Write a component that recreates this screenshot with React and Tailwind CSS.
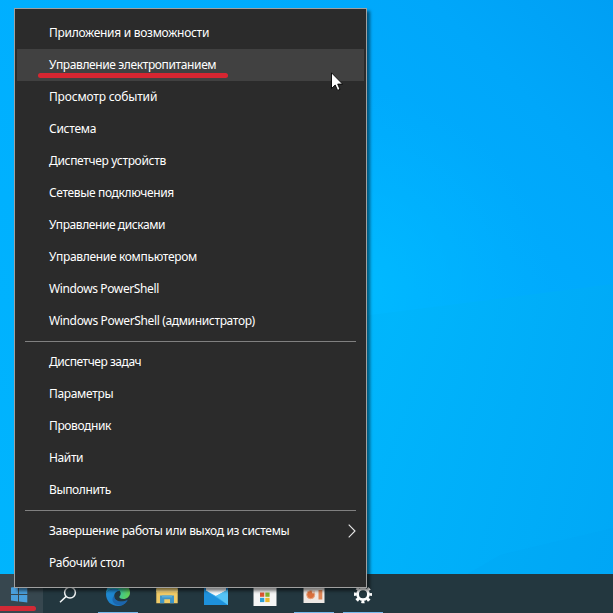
import React from "react";

const menuGroups = [
  [
    { label: "Приложения и возможности", tracking: "tracking-[-0.28px]" },
    { label: "Управление электропитанием", tracking: "tracking-[-0.38px]", active: true },
    { label: "Просмотр событий", tracking: "tracking-[-0.18px]" },
    { label: "Система", tracking: "tracking-[-0.28px]" },
    { label: "Диспетчер устройств", tracking: "tracking-[-0.32px]" },
    { label: "Сетевые подключения", tracking: "tracking-[-0.36px]" },
    { label: "Управление дисками", tracking: "tracking-[-0.42px]" },
    { label: "Управление компьютером", tracking: "tracking-[-0.32px]" },
    { label: "Windows PowerShell", tracking: "tracking-[-0.38px]" },
    { label: "Windows PowerShell (администратор)", tracking: "tracking-[-0.35px]" },
  ],
  [
    { label: "Диспетчер задач", tracking: "tracking-[-0.46px]" },
    { label: "Параметры", tracking: "tracking-[-0.33px]" },
    { label: "Проводник", tracking: "tracking-[-0.38px]" },
    { label: "Найти", tracking: "tracking-[-0.38px]" },
    { label: "Выполнить", tracking: "tracking-[-0.38px]" },
  ],
  [
    { label: "Завершение работы или выход из системы", tracking: "tracking-[-0.32px]", submenu: true },
    { label: "Рабочий стол", tracking: "tracking-[-0.24px]" },
  ],
];

const Wallpaper = () => (
  <svg className="absolute inset-0 h-full w-full" viewBox="0 0 613 613">
    <defs>
      <linearGradient id="sky" x1="0" y1="613" x2="613" y2="0" gradientUnits="userSpaceOnUse">
        <stop offset="0" stopColor="#00b5fd" />
        <stop offset="0.6" stopColor="#00aeff" />
        <stop offset="0.85" stopColor="#00a7fa" />
        <stop offset="1" stopColor="#009ff4" />
      </linearGradient>
      <radialGradient id="glow" cx="350" cy="290" r="200" gradientUnits="userSpaceOnUse">
        <stop offset="0" stopColor="#00bbff" />
        <stop offset="1" stopColor="#00b4ff" stopOpacity="0" />
      </radialGradient>
      <linearGradient id="beam" x1="370" y1="400" x2="640" y2="480" gradientUnits="userSpaceOnUse">
        <stop offset="0" stopColor="#00b5fb" />
        <stop offset="1" stopColor="#00a7f5" />
      </linearGradient>
    </defs>
    <rect width="613" height="613" fill="url(#sky)" />
    <rect width="613" height="613" fill="url(#glow)" />
    <path d="M200 337 L370 315 L613 284 V613 H200Z" fill="url(#beam)" opacity="0.85" />
    <path d="M500 555 L613 528 V613 H400Z" fill="#009ff0" opacity="0.12" />
  </svg>
);

const StartIcon = () => (
  <svg className="h-6 w-6" viewBox="0 0 24 24" fill="#4a9fdc">
    <path d="M4 5.600 11 4.600V12H4zM12 4.400 20.300 3.200V12H12zM4 13H11V19.400L4 18.500zM12 13H20.300V20.600L12 19.500z" />
  </svg>
);

const SearchIcon = () => (
  <svg className="h-6 w-6" viewBox="0 0 24 24" fill="none" stroke="#f2f5f6" strokeWidth="1.5">
    <circle cx="13" cy="10.600" r="5.400" />
    <path d="M9.200 14.400 3 20.200" />
  </svg>
);

const EdgeIcon = () => (
  <svg className="h-6 w-6" viewBox="0 0 24 24">
    <defs>
      <linearGradient id="edgeTop" x1="0" y1="0.3" x2="1" y2="0.5">
        <stop offset="0" stopColor="#2aa7e4" />
        <stop offset="0.5" stopColor="#31c3ac" />
        <stop offset="1" stopColor="#62cf56" />
      </linearGradient>
      <linearGradient id="edgeBody" x1="0" y1="0" x2="0.7" y2="1">
        <stop offset="0" stopColor="#1f8fd6" />
        <stop offset="1" stopColor="#1c78c4" />
      </linearGradient>
    </defs>
    <path d="M0 12C0 4 6 0 12 0c7 0 12 5 12 10.500 0 4-3 6.500-6.600 6.500-3 0-4-1-4-1.900 0-.9 1.300-1.400 1.300-3.500C14.700 8.800 12 7 8.500 7 4 7 .5 9 0 12z" fill="url(#edgeTop)" />
    <path d="M0 12C.4 9 4 6.800 8.500 6.800c2.500 0 4.500.9 5.500 2.200-2.500-.5-5.400 1-5.800 4.500-.5 5 5.500 7.500 11.500 5.200l1.600-.5C19.500 21.800 16 24 12 24 5 24 0 19 0 12z" fill="url(#edgeBody)" />
    <path d="M8.200 13.500c-.2 5 5 7.500 11 5.500 1.300-.4 2.300-1 2.500-.8.2.2-2 4.300-7.500 5.200C8 23 4 18.500 8.200 13.500z" fill="#1b5da3" opacity="0.7" />
  </svg>
);

const FolderIcon = () => (
  <svg className="h-6 w-6" viewBox="0 0 24 24">
    <path d="M1.300 2h10l2 2h9.400v17.200H1.300z" fill="#f0cb68" />
    <path d="M1.300 7h21.400v3H1.300z" fill="#f8da82" />
    <path d="M5 21.200v-7.700h14v7.700h-4v-4H9.300v4z" fill="#4096c8" />
    <path d="M7 13.500h10v2H7z" fill="#59add9" />
  </svg>
);

const MailIcon = () => (
  <svg className="h-6 w-6" viewBox="0 0 24 24">
    <path d="M0 6 12 0l12 6v17H0z" fill="#1780d1" />
    <path d="M2 4h20v5l-10 6L2 9z" fill="#f6f9fb" />
    <path d="M0 7.500 12 14 24 7.500V23H0z" fill="#38aeee" />
    <path d="M0 7.500 24 23H0z" fill="#1e91dc" />
    <path d="M24 7.500 12 14 24 23z" fill="#55c3f5" />
  </svg>
);

const StoreIcon = () => (
  <svg className="h-6 w-6" viewBox="0 0 24 24">
    <path d="M.5 5h23v19H.5z" fill="#f5f5f5" />
    <path d="M7 5V2h10v3" fill="none" stroke="#d2d2d2" strokeWidth="2" />
    <path d="M7 10.500h4.300v4.300H7z" fill="#dc5531" />
    <path d="M12.300 10.500h4.300v4.300h-4.300z" fill="#80af2d" />
    <path d="M7 15.800h4.300v4.300H7z" fill="#2e9fd5" />
    <path d="M12.300 15.800h4.300v4.300h-4.300z" fill="#edb72b" />
  </svg>
);

const RecorderIcon = () => (
  <svg className="h-6 w-6" viewBox="0 0 24 24">
    <path d="M1.500 2h21v19h-21z" fill="#eee8e4" />
    <circle cx="8.700" cy="12.700" r="4" fill="#d96f3c" stroke="#e9a47e" strokeWidth="1" />
    <path d="M10 8.800h3v2.500h-3z" fill="#e8c4b0" />
    <path d="M16.500 8h3.800v9.500h-3.800z" fill="#de8555" />
  </svg>
);

const GearIcon = () => (
  <svg className="h-6 w-6" viewBox="0 0 24 24" fill="none" stroke="#fff">
    <circle cx="12" cy="12.300" r="5.400" strokeWidth="2.700" />
    <circle cx="12" cy="12.300" r="7.600" strokeWidth="2.800" strokeDasharray="3.100 2.869" strokeDashoffset="1.550" />
  </svg>
);

const taskbarApps = [
  { id: "search", Icon: SearchIcon },
  { id: "edge", Icon: EdgeIcon, running: true },
  { id: "explorer", Icon: FolderIcon },
  { id: "mail", Icon: MailIcon },
  { id: "store", Icon: StoreIcon },
  { id: "recorder", Icon: RecorderIcon, running: true },
  { id: "settings", Icon: GearIcon, running: true },
];

const Taskbar = () => (
  <div className="relative flex h-[39px] w-full bg-[#23373f]">
    <div className="mr-px flex w-[43px] flex-col bg-[#37474f]">
      <div className="flex h-8 items-end pl-[7px]">
        <StartIcon />
      </div>
      <div className="h-[5px] w-9 rounded-r-full bg-[#d32a36]" />
    </div>
    {taskbarApps.map(({ id, Icon, running }) => (
      <div key={id} className="flex w-[49px] flex-col items-center justify-between">
        <div className="flex h-8 items-end">
          <Icon />
        </div>
        {running && <div className="h-px w-10 bg-[#76b9ed]" />}
      </div>
    ))}
  </div>
);

const MenuItem = ({ item }) => (
  <div className={`flex h-8 items-center justify-between pl-8 pr-2 ${item.active ? "bg-[#414141]" : ""}`}>
    <span className={`relative whitespace-nowrap ${item.tracking}`}>
      {item.label}
      {item.active && (
        <span className="absolute -left-[11px] top-[16px] h-[5px] w-[190px] rounded-full bg-[#d72631]" />
      )}
    </span>
    {item.submenu && (
      <svg className="h-[14px] w-2" viewBox="0 0 8 14" fill="none" stroke="#e8e8e8" strokeWidth="1.1">
        <path d="M0.700 0.700 7 7 0.700 13.300" />
      </svg>
    )}
  </div>
);

const ContextMenu = () => (
  <div className="absolute left-[14px] top-2 w-[353px] border border-[#a0a0a0] bg-[#2b2b2b] px-[2px] py-2 text-[12px] leading-4 text-white shadow-[3px_3px_3px_rgba(0,0,0,0.5)]">
    {menuGroups.map((group, i) => (
      <div key={i}>
        {i > 0 && (
          <div className="flex h-[9px] items-center px-2">
            <div className="h-px w-full bg-[#808080]" />
          </div>
        )}
        {group.map((item) => (
          <MenuItem key={item.label} item={item} />
        ))}
      </div>
    ))}
  </div>
);

const Cursor = () => (
  <svg className="absolute left-[331px] top-[72px] h-[19px] w-3" viewBox="0 0 12 19">
    <path d="M0.500 0.800V16.500L4.200 13 6.600 18.400 9 17.300 6.700 12.100H11.600z" fill="#fff" stroke="#000" strokeWidth="0.900" />
  </svg>
);

const App = () => {
  return (
    <div className="relative flex h-screen w-full flex-col justify-end overflow-hidden bg-[#00adff] font-['Noto_Sans','Open_Sans',sans-serif]">
      <Wallpaper />
      <Taskbar />
      <ContextMenu />
      <Cursor />
    </div>
  );
};

export default App;
